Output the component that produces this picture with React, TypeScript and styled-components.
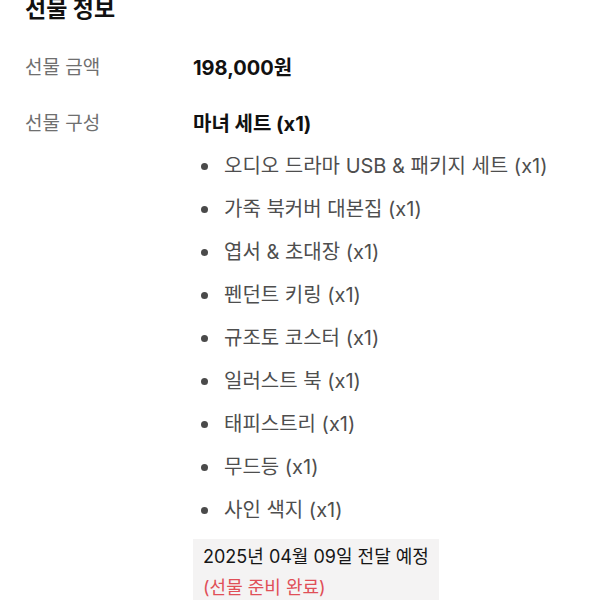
import React from "react";
import styled, { createGlobalStyle } from "styled-components";

const GlobalStyle = createGlobalStyle`
  html, body {
    margin: 0;
    padding: 0;
    background: #ffffff;
  }
  body {
    font-family: Inter, "Noto Sans CJK KR", "Noto Sans", sans-serif;
    -webkit-font-smoothing: antialiased;
  }
`;

const gift = {
  price: "198,000원",
  setName: "마녀 세트 (x1)",
  items: [
    "오디오 드라마 USB & 패키지 세트 (x1)",
    "가죽 북커버 대본집 (x1)",
    "엽서 & 초대장 (x1)",
    "펜던트 키링 (x1)",
    "규조토 코스터 (x1)",
    "일러스트 북 (x1)",
    "태피스트리 (x1)",
    "무드등 (x1)",
    "사인 색지 (x1)",
  ],
  delivery: "2025년 04월 09일 전달 예정",
  status: "(선물 준비 완료)",
};

export default function App() {
  return (
    <>
      <GlobalStyle />
      <Section>
        <Title>선물 정보</Title>
        <InfoGrid>
          <Label>선물 금액</Label>
          <Value>{gift.price}</Value>

          <Label>선물 구성</Label>
          <div>
            <Value>{gift.setName}</Value>
            <ItemList>
              {gift.items.map((item) => (
                <Item key={item}>{item}</Item>
              ))}
            </ItemList>
            <DeliveryBox>
              <DeliveryDate>{gift.delivery}</DeliveryDate>
              <Status>{gift.status}</Status>
            </DeliveryBox>
          </div>
        </InfoGrid>
      </Section>
    </>
  );
}

const Section = styled.section`
  padding: 0 25px;
`;

const Title = styled.h2`
  margin: -6px 0 0;
  font-size: 23px;
  line-height: 30px;
  font-weight: 700;
  color: #111111;
`;

const InfoGrid = styled.div`
  display: grid;
  grid-template-columns: 168px 1fr;
  row-gap: 14px;
  margin-top: 23px;
`;

const Label = styled.div`
  font-size: 19px;
  line-height: 42px;
  color: #6f6f6f;
`;

const Value = styled.div`
  font-size: 20px;
  line-height: 42px;
  font-weight: 700;
  color: #111111;
`;

const ItemList = styled.ul`
  list-style: none;
  margin: 0;
  padding: 0;
`;

const Item = styled.li`
  display: flex;
  align-items: center;
  gap: 16px;
  padding-left: 8px;
  font-size: 20px;
  line-height: 43px;
  color: #4e4e4e;

  &::before {
    content: "";
    flex: none;
    width: 7px;
    height: 7px;
    border-radius: 50%;
    background: #4a4a4a;
  }
`;

const DeliveryBox = styled.div`
  display: inline-block;
  margin-top: 7px;
  padding: 2px 10px 8px;
  background: #f4f3f3;
`;

const DeliveryDate = styled.div`
  font-size: 18px;
  line-height: 31px;
  color: #161616;
`;

const Status = styled.div`
  font-size: 18px;
  line-height: 31px;
  color: #e04f57;
`;
